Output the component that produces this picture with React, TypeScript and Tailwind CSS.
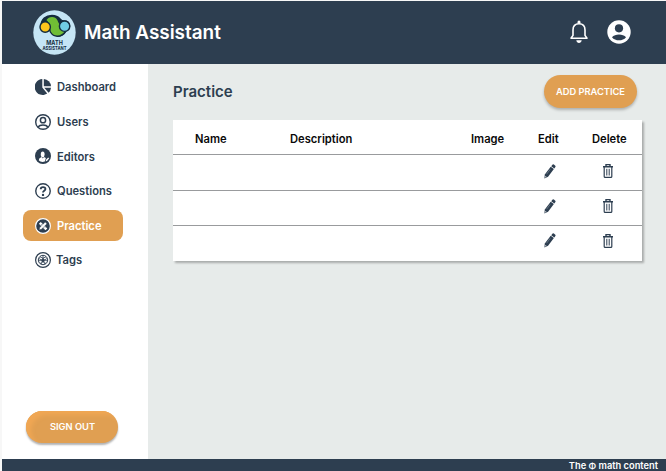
import type { ReactNode } from "react";

function Logo() {
  return (
    <svg viewBox="0 0 43 45" className="h-[45px] w-[43px] shrink-0">
      <ellipse cx="21.5" cy="22.5" rx="21.2" ry="22.3" fill="#c5e5f5" />
      <g stroke="#142c3e" strokeWidth="1.4">
        <path d="M8 16C8 9 13 5.5 19 5.5C28 5.5 26 11 31 11C38 11 38 19 33 21C29 28 22 27 19 22C17 18 15 22 12 21.5C8 21 7 19 8 16Z" fill="#142c3e" />
        <path d="M12.5 10C16 5 22.5 5.2 25 10C27 14 28 17 32.5 21.5C28 28 20.5 27.4 17.4 22C15.6 18 17 13.5 12.5 10Z" fill="#70bd35" />
        <circle cx="12.2" cy="17" r="5.2" fill="#fdc51b" />
        <circle cx="31.6" cy="16.2" r="5.2" fill="#70cde4" />
      </g>
      <g fill="#142c3e" textAnchor="middle" fontFamily="Inter, sans-serif" fontWeight="700">
        <text x="21.5" y="35" fontSize="6.2" textLength="16.5" lengthAdjust="spacingAndGlyphs">MATH</text>
        <text x="21.5" y="40.4" fontSize="5" textLength="24" lengthAdjust="spacingAndGlyphs">ASSISTANT</text>
      </g>
    </svg>
  );
}

function Icon({ children }: { children: ReactNode }) {
  return (
    <svg viewBox="0 0 16 16" fill="none" className="h-4 w-4 shrink-0">
      {children}
    </svg>
  );
}

const navy = "#2d3e50";

const dashboard = (
  <Icon>
    <path d="M7.3 0V8.5L12.2 14.6A8 8 0 1 1 7.3 0Z" fill={navy} />
    <path d="M8.8 0A7.6 7.6 0 0 1 16 7.2H8.8Z" fill={navy} />
    <path d="M9.2 8.7H16A8 8 0 0 1 13.6 13.8Z" fill={navy} />
  </Icon>
);

const users = (
  <Icon>
    <circle cx="8" cy="8" r="7.3" stroke={navy} strokeWidth="1.4" />
    <circle cx="8" cy="6.2" r="2.6" stroke={navy} strokeWidth="1.5" />
    <path d="M3 13C5 10.2 11 10.2 13 13" stroke={navy} strokeWidth="1.5" />
  </Icon>
);

const editors = (
  <Icon>
    <circle cx="8" cy="8" r="8" fill={navy} />
    <ellipse cx="7.7" cy="6.4" rx="1.9" ry="2.8" fill="#fff" />
    <path d="M3.8 12.2C4 10 5.4 9.6 6.8 9.1L7.8 10.4L8.9 9.1L10.9 10L9.8 13.5C7.5 14.3 5.2 13.9 3.8 12.2Z" fill="#fff" />
    <path d="M10.7 13.6L11 11.8L13.2 9.4L14.2 10.3L12.2 12.8Z" fill="#fff" />
  </Icon>
);

const questions = (
  <Icon>
    <circle cx="8" cy="8" r="7.25" stroke={navy} strokeWidth="1.4" />
    <path d="M5.7 6.3C5.7 3.4 10.4 3.4 10.4 6.1C10.4 7.8 8 7.8 8 9.6" stroke={navy} strokeWidth="1.9" />
    <circle cx="8" cy="11.9" r="1.2" fill={navy} />
  </Icon>
);

const practice = (
  <Icon>
    <circle cx="8" cy="8" r="7.4" fill={navy} stroke="#fff" strokeWidth="1.2" />
    <path d="M4.8 4.8L11.4 11.4" stroke="#fff" strokeWidth="2.6" />
    <path d="M4 12L4.8 9.5L10.2 4L12 5.8L6.5 11.2Z" fill="#fff" stroke={navy} strokeWidth=".5" />
    <path d="M6 6.9L6.8 6.1M9.3 10.2L10.1 9.4" stroke={navy} strokeWidth=".6" />
  </Icon>
);

const tags = (
  <Icon>
    <circle cx="8" cy="8" r="7.4" stroke={navy} strokeWidth="1.2" />
    <circle cx="8" cy="8" r="4.7" stroke={navy} strokeWidth="1" />
    <path d="M8 3.5V6.2M4 6.5L6.5 8M12 6.5L9.5 8M5.3 11.7L7 9.5M10.7 11.7L9 9.5M5 4.8L8 6.2L11 4.8M3.6 9L6.5 8L7 9.5H9L9.5 8L12.4 9M8 6.2L6.5 8M8 6.2L9.5 8M6 12L8 9.5L10 12" stroke={navy} strokeWidth=".8" />
    <path d="M8 6.2L9.5 8L9 9.5H7L6.5 8Z" fill={navy} />
  </Icon>
);

const items = [
  { label: "Dashboard", icon: dashboard },
  { label: "Users", icon: users },
  { label: "Editors", icon: editors },
  { label: "Questions", icon: questions },
  { label: "Practice", icon: practice },
  { label: "Tags", icon: tags },
];

function Pencil() {
  return (
    <svg viewBox="0 0 12 15" className="h-[15px] w-3">
      <path d="M.4 14.5L.8 10.6L6.7 2.8L9.9 5.1L4.1 12.8Z" fill={navy} />
      <path d="M7.2 2.2L8.4 .7Q9 .1 9.9 .6L11.3 1.7Q11.9 2.3 11.4 3.1L10.3 4.6Z" fill={navy} />
      <path d="M2.6 10.2L6.2 5.4" stroke="#8794a0" strokeWidth=".6" />
      <path d="M1.3 11.9L2.6 12.9L1.2 13.5Z" fill="#fff" />
    </svg>
  );
}

function Trash() {
  return (
    <svg viewBox="0 0 10 14" fill="none" stroke={navy} className="h-3.5 w-2.5">
      <path d="M0 2.7H10M3 2.5V.6H7V2.5" strokeWidth="1.4" />
      <path d="M1.2 3V12.4Q1.2 13.3 2.1 13.3H7.9Q8.8 13.3 8.8 12.4V3" strokeWidth="1.2" />
      <path d="M3.8 4.8V11.5M6.2 4.8V11.5" strokeWidth="1" />
    </svg>
  );
}

const rows = ["h-9 border-b pb-[3px]", "h-[35px] border-b pb-1", "h-[35px] pb-[6px]"];
const columns = "grid grid-cols-[95px_181px_67px_59px_67px] items-center";

export default function App() {
  return (
    <div className="flex h-[471px] w-[666px] flex-col overflow-hidden border-l-2 border-t border-[#f7f7f7] bg-white font-['Inter',sans-serif] text-[#2d3e50]">
      <header className="flex h-[63px] shrink-0 items-center bg-[#2d3e50] pl-[31px] pr-[35px] text-white">
        <Logo />
        <h1 className="ml-2 flex-1 whitespace-nowrap pt-px text-[18.9px] font-semibold leading-6">Math Assistant</h1>
        <svg viewBox="0 0 20 24" fill="none" className="mb-px mr-[18px] h-6 w-5">
          <path d="M2 18.2H18L16 15.4V10C16 6.2 13.8 3.7 10 3.7S4 6.2 4 10V15.4Z" stroke="#fff" strokeWidth="1.6" strokeLinejoin="round" />
          <path d="M8.5 3.5V2A1.5 1.5 0 0 1 11.5 2V3.5ZM7.3 20.3H12.7C12.4 22 11.4 23 10 23S7.6 22 7.3 20.3Z" fill="#fff" />
        </svg>
        <svg viewBox="0 0 24 24" className="mb-px h-6 w-6">
          <circle cx="12" cy="12" r="11.7" fill="#fff" />
          <circle cx="12" cy="8.3" r="4.1" fill={navy} />
          <path d="M5 17.2C8 13.7 16 13.7 19 17.2C15.8 21.4 8.2 21.4 5 17.2Z" fill={navy} />
        </svg>
      </header>
      <div className="flex min-h-0 flex-1">
        <aside className="flex w-[146px] shrink-0 flex-col pb-4 pl-[21px] pt-2">
          <nav className="flex flex-col gap-1">
            {items.map(({ label, icon }) => (
              <a
                key={label}
                className={`flex h-[30.6px] w-[100px] items-center rounded-lg pl-3 text-[11.2px] font-semibold ${label === "Practice" ? "bg-[#e09f52] text-white" : ""} ${label === "Tags" ? "gap-[5px]" : "gap-1.5"}`}
              >
                {icon}
                <span className="pt-px">{label}</span>
              </a>
            ))}
          </nav>
          <button className="ml-[3px] mt-auto h-8 w-[92px] rounded-full bg-[#e09f52] pl-px text-[9.3px] font-semibold text-white shadow-[0_2px_2px_#0000004d,inset_5px_4px_4px_#f0a754]">
            SIGN OUT
          </button>
        </aside>
        <main className="flex-1 bg-[#e7ebea] pl-[25px] pr-6 pt-[11px]">
          <div className="flex h-[45px] items-start justify-between pr-[5px]">
            <h2 className="mt-[5px] text-[15px] font-semibold leading-6">Practice</h2>
            <button className="h-[33px] w-[93px] rounded-full bg-[#e09f52] text-[9.3px] font-semibold text-white shadow-[0_2px_3px_#00000040]">
              ADD PRACTICE
            </button>
          </div>
          <section className="w-[469px] bg-white shadow-[2px_2px_2px_#00000045]">
            <div className={`${columns} h-[35px] border-b border-[#999b9d] pl-[22px] pt-[5px] text-[11.2px] font-semibold text-[#090909]`}>
              <span>Name</span>
              <span>Description</span>
              <span>Image</span>
              <span>Edit</span>
              <span className="-ml-[5px]">Delete</span>
            </div>
            {rows.map((row) => (
              <div key={row} className={`${columns} border-[#999b9d] pl-[22px] ${row}`}>
                <span />
                <span />
                <span />
                <span className="pl-[6px]"><Pencil /></span>
                <span className="pl-[6px]"><Trash /></span>
              </div>
            ))}
          </section>
        </main>
      </div>
      <footer className="flex h-3 shrink-0 items-center justify-end whitespace-pre bg-[#2d3e50] pr-2 pt-[2px] text-[9.3px] font-semibold leading-3 text-white">
        The <span className="text-[8.6px]">Φ</span> math content
      </footer>
    </div>
  );
}
